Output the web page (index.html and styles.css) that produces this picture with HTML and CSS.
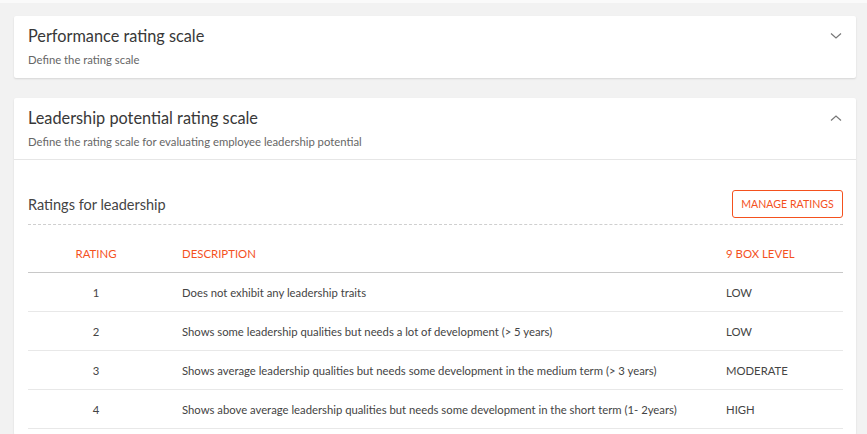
FILE: index.html
```html
<!DOCTYPE html>
<html>
<head>
<meta charset="utf-8">
<link rel="stylesheet" href="styles.css">
</head>
<body>
<div class="page">
  <section class="card">
    <div class="card-head">
      <div class="head-text">
        <h2 class="card-title">Performance rating scale</h2>
        <p class="card-sub">Define the rating scale</p>
      </div>
      <svg class="chev" width="12" height="8" viewBox="0 0 12 8"><path d="M1 1.5 L6 6 L11 1.5" fill="none" stroke="#777" stroke-width="1.2"/></svg>
    </div>
  </section>

  <section class="card">
    <div class="card-head open">
      <div class="head-text">
        <h2 class="card-title">Leadership potential rating scale</h2>
        <p class="card-sub">Define the rating scale for evaluating employee leadership potential</p>
      </div>
      <svg class="chev" width="12" height="8" viewBox="0 0 12 8"><path d="M1 6.5 L6 2 L11 6.5" fill="none" stroke="#777" stroke-width="1.2"/></svg>
    </div>
    <div class="card-body">
      <div class="section-row">
        <h3 class="section-title">Ratings for leadership</h3>
        <button class="btn-outline">MANAGE RATINGS</button>
      </div>
      <div class="table">
        <div class="tr th">
          <div class="c-rating">RATING</div>
          <div class="c-desc">DESCRIPTION</div>
          <div class="c-level">9 BOX LEVEL</div>
        </div>
        <div class="tr">
          <div class="c-rating">1</div>
          <div class="c-desc">Does not exhibit any leadership traits</div>
          <div class="c-level">LOW</div>
        </div>
        <div class="tr">
          <div class="c-rating">2</div>
          <div class="c-desc">Shows some leadership qualities but needs a lot of development (&gt; 5 years)</div>
          <div class="c-level">LOW</div>
        </div>
        <div class="tr">
          <div class="c-rating">3</div>
          <div class="c-desc">Shows average leadership qualities but needs some development in the medium term (&gt; 3 years)</div>
          <div class="c-level">MODERATE</div>
        </div>
        <div class="tr">
          <div class="c-rating">4</div>
          <div class="c-desc">Shows above average leadership qualities but needs some development in the short term (1- 2years)</div>
          <div class="c-level">HIGH</div>
        </div>
      </div>
    </div>
  </section>
</div>
</body>
</html>
```

FILE: styles.css
```css
* { box-sizing: border-box; }
html, body { margin: 0; padding: 0; }
body {
  background: #f2f2f2;
  font-family: Lato, "Open Sans", sans-serif;
  color: #333;
  border-top: 3px solid #fafafa;
  height: 434px;
  overflow: hidden;
}
.page {
  padding: 13px 11px 0 14px;
  display: flex;
  flex-direction: column;
  gap: 20px;
}
.card {
  background: #fff;
  border-radius: 2px;
  box-shadow: 0 1px 2px rgba(0,0,0,0.12);
}
.card-head {
  height: 62px;
  padding: 9px 14px 0 14px;
  display: flex;
  justify-content: space-between;
  align-items: flex-start;
}
.card-head.open { border-bottom: 1px solid #e6e6e6; }
.card-title {
  margin: 0;
  font-size: 16.3px;
  font-weight: 400;
  color: #383838;
  line-height: 22px;
}
.card-sub {
  margin: 6px 0 0;
  font-size: 11.3px;
  color: #666;
  line-height: 14px;
}
.chev { margin-top: 7px; }
.card-body {
  padding: 0 13px 6px 14px;
}
.section-row {
  display: flex;
  justify-content: space-between;
  align-items: center;
  padding: 30px 0 6px;
  border-bottom: 1px dashed #cfcfcf;
}
.section-title {
  margin: 0;
  font-size: 14.5px;
  font-weight: 400;
  color: #444;
}
.btn-outline {
  height: 28px;
  width: 111px;
  padding: 0;
  background: #fff;
  border: 1px solid #f4511e;
  border-radius: 3px;
  color: #f4511e;
  font-family: Lato, sans-serif;
  font-size: 10.6px;
}
.table { display: flex; flex-direction: column; }
.tr {
  display: flex;
  align-items: center;
  height: 39px;
  border-bottom: 1px solid #e8e8e8;
  font-size: 11.3px;
  color: #444;
}
.tr.th {
  height: 48px;
  padding-top: 9px;
  border-bottom: 1px solid #c8c8c8;
  color: #f4511e;
  font-size: 11.4px;
}
.c-rating { width: 136px; text-align: center; }
.c-desc { width: 562px; padding-left: 18px; flex: none; }
.c-level { flex: 1; }
```
